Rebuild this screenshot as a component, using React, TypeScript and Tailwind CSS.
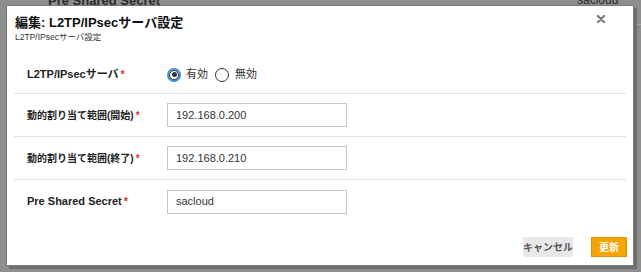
import React from "react";

const jp = { fontFamily: '"Liberation Sans", "Noto Sans CJK JP", sans-serif' };

function Label({ children, small }: { children: React.ReactNode; small?: boolean }) {
  return (
    <div className={small ? "w-[153px] pl-[13px] text-[10px] font-bold text-[#222]" : "w-[153px] pl-[13px] text-[11px] font-bold text-[#222]"}>
      {children}
      <span className="text-[#e0322d] ml-[2px]">*</span>
    </div>
  );
}

function Input({ value }: { value: string }) {
  return (
    <div className="w-[180px] h-[24px] border border-[#c8c8c8] bg-white flex items-center pl-[8px] text-[11px] text-[#333]">
      {value}
    </div>
  );
}

export default function App() {
  return (
    <div className="relative w-[641px] h-[272px] bg-[#8e8e8e] overflow-hidden" style={jp}>
      <div className="absolute left-[48px] top-[-9px] text-[13px] font-bold text-[#2b2b2b]">Pre Shared Secret</div>
      <div className="absolute left-[577px] top-[-9px] text-[12px] text-[#2b2b2b]">sacloud</div>
      <div className="absolute left-[636px] top-[24px] w-[5px] h-[1px] bg-[#a5a5a5]" />
      <div className="absolute left-[7px] top-[6px] w-[626px] h-[259px] bg-white shadow-[0_0_0_1px_#7a7a7a,3px_3px_1px_1px_#6f6f6f] flex flex-col">
        <div className="relative pl-[8px] pt-[8px]">
          <div className="text-[13px] font-bold text-[#111] leading-[18px]">編集: L2TP/IPsecサーバ設定</div>
          <div className="text-[8.5px] text-[#333] leading-[12px] mt-[-1px]">L2TP/IPsecサーバ設定</div>
          <svg className="absolute right-[28px] top-[9px]" width="8" height="8" viewBox="0 0 8 8">
            <path d="M1 1L7 7M7 1L1 7" stroke="#7a7a7a" strokeWidth="2.2" strokeLinecap="round" />
          </svg>
        </div>
        <div className="mx-[7px] mt-[13px] flex flex-col">
          <div className="h-[38px] flex items-center border-b border-[#e3e3e3]">
            <Label>L2TP/IPsecサーバ</Label>
            <div className="flex items-center text-[11px] text-[#333]">
              <span className="w-[14px] h-[14px] rounded-full border-2 border-[#3d8ddb] flex items-center justify-center">
                <span className="w-[10px] h-[10px] rounded-full border border-[#333] flex items-center justify-center">
                  <span className="w-[5px] h-[5px] rounded-full bg-[#333]" />
                </span>
              </span>
              <span className="ml-[5px]">有効</span>
              <span className="ml-[7px] w-[14px] h-[14px] rounded-full border-[1.5px] border-[#333]" />
              <span className="ml-[6px]">無効</span>
            </div>
          </div>
          <div className="h-[43px] flex items-center border-b border-[#e3e3e3]">
            <Label small>動的割り当て範囲(開始)</Label>
            <Input value="192.168.0.200" />
          </div>
          <div className="h-[43px] flex items-center border-b border-[#e3e3e3]">
            <Label small>動的割り当て範囲(終了)</Label>
            <Input value="192.168.0.210" />
          </div>
          <div className="h-[43px] flex items-center">
            <Label>Pre Shared Secret</Label>
            <Input value="sacloud" />
          </div>
        </div>
        <div className="mt-[14px] mr-[6px] flex justify-end gap-[18px]">
          <div className="w-[50px] h-[20px] bg-[#e8e8e8] flex items-center justify-center text-[10px] font-bold text-[#555]">キャンセル</div>
          <div className="w-[36px] h-[20px] bg-[#f7a300] border border-[#e28f00] flex items-center justify-center text-[10px] font-bold text-white">更新</div>
        </div>
      </div>
    </div>
  );
}
